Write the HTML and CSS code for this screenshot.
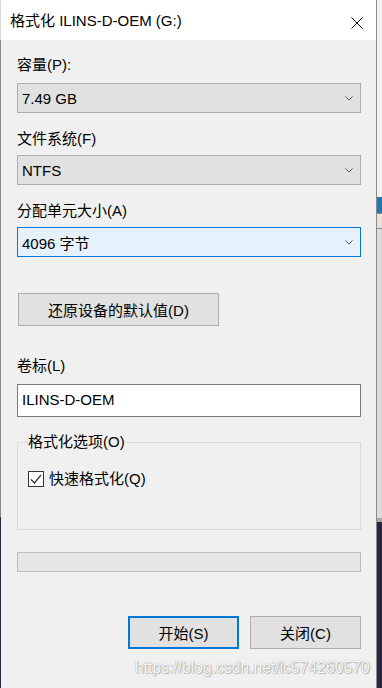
FILE: index.html
```html
<!DOCTYPE html>
<html lang="zh-CN">
<head>
  <meta charset="UTF-8" />
  <title>格式化 ILINS-D-OEM (G:)</title>
  <meta name="viewport" content="width=device-width, initial-scale=1" />
  <link rel="stylesheet" href="styles.css">
</head>
<body>

  <div class="screen">
    <div class="edge-left"></div>

    <div class="dialog">
      <!-- Title bar -->
      <div class="titlebar">
        <span class="title">格式化 ILINS-D-OEM (G:)</span>
        <svg class="close" width="12" height="12" viewBox="0 0 12 12">
          <path d="M0.5 0.5 L11.5 11.5 M11.5 0.5 L0.5 11.5" stroke="#000" stroke-width="1" fill="none" />
        </svg>
      </div>

      <div class="content">
        <label class="label first">容量(P):</label>
        <div class="combo">
          <span>7.49 GB</span>
          <svg class="arrow" width="8" height="5" viewBox="0 0 8 5"><path d="M0.5 0.5 L4 4 L7.5 0.5" stroke="#555" fill="none" /></svg>
        </div>

        <label class="label">文件系统(F)</label>
        <div class="combo">
          <span>NTFS</span>
          <svg class="arrow" width="8" height="5" viewBox="0 0 8 5"><path d="M0.5 0.5 L4 4 L7.5 0.5" stroke="#555" fill="none" /></svg>
        </div>

        <label class="label">分配单元大小(A)</label>
        <div class="combo focused">
          <span>4096 字节</span>
          <svg class="arrow" width="8" height="5" viewBox="0 0 8 5"><path d="M0.5 0.5 L4 4 L7.5 0.5" stroke="#555" fill="none" /></svg>
        </div>

        <button class="btn restore">还原设备的默认值(D)</button>

        <label class="label volume">卷标(L)</label>
        <div class="textbox">ILINS-D-OEM</div>

        <fieldset class="group">
          <legend>格式化选项(O)</legend>
          <div class="check-row">
            <span class="checkbox">
              <svg width="14" height="14" viewBox="0 0 14 14"><path d="M2 7.5 L5.5 11 L12 3" stroke="#333" stroke-width="1.2" fill="none" /></svg>
            </span>
            <span>快速格式化(Q)</span>
          </div>
        </fieldset>

        <div class="progress"></div>

        <div class="actions">
          <button class="btn default">开始(S)</button>
          <button class="btn">关闭(C)</button>
        </div>
      </div>

      <div class="watermark">https://blog.csdn.net/lc574260570</div>
    </div>

    <div class="edge-right">
      <div class="strip top"></div>
      <div class="strip blue"></div>
      <div class="strip tab"></div>
      <div class="strip mid"></div>
      <div class="strip line"></div>
      <div class="strip dark"></div>
    </div>
  </div>

</body>
</html>
```

FILE: styles.css
```css
* {
  margin: 0;
  padding: 0;
  box-sizing: border-box;
}

body, html {
  height: 100%;
  font-family: "Liberation Sans", "Noto Sans CJK SC", sans-serif;
  font-size: 15px;
  color: #000;
  background: #f0f0f0;
  overflow: hidden;
}

.screen {
  display: flex;
  height: 688px;
  width: 382px;
}

.edge-left {
  width: 1px;
  background: linear-gradient(#d8d8d8 0, #d8d8d8 40px, #8c8c8c 40px, #8c8c8c 517px, #2a2340 517px);
}

.dialog {
  position: relative;
  width: 376px;
  height: 688px;
  border-right: 1px solid #8a8a8a;
  background: #f0f0f0;
}

.titlebar {
  height: 40px;
  background: #fff;
  display: flex;
  align-items: center;
  justify-content: space-between;
  padding: 2px 13px 0 9px;
}

.title {
  line-height: 20px;
}

.close {
  margin-top: 3px;
}

.content {
  padding: 0 15px 0 16px;
}

.label {
  display: block;
  line-height: 20px;
  margin-top: 16px;
  margin-bottom: 6px;
}

.label.first {
  margin-top: 15px;
  margin-bottom: 8px;
}

.combo {
  height: 30px;
  background: #e1e1e1;
  border: 1px solid #adadad;
  display: flex;
  align-items: center;
  justify-content: space-between;
  padding: 0 7px 0 4px;
}

.combo.focused {
  background: #e5f1fb;
  border-color: #0078d7;
}

.arrow {
  margin-top: 1px;
}

.btn {
  font-family: inherit;
  font-size: 15px;
  color: #000;
  background: #e1e1e1;
  border: 1px solid #adadad;
  height: 33px;
  width: 111px;
}

.btn.restore {
  display: block;
  width: 201px;
  margin: 36px 0 0 1px;
}

.btn.default {
  border: 2px solid #0078d7;
}

.label.volume {
  margin-top: 30px;
  margin-bottom: 8px;
}

.textbox {
  height: 33px;
  background: #fff;
  border: 1px solid #7a7a7a;
  line-height: 29px;
  padding-left: 4px;
}

.group {
  margin-top: 15px;
  height: 98px;
  border: 1px solid #dcdcdc;
  padding: 0 0 0 10px;
}

.group legend {
  line-height: 20px;
  padding: 0 1px 0 0;
}

.check-row {
  display: flex;
  align-items: center;
  gap: 5px;
  margin-top: 17px;
  line-height: 20px;
}

.checkbox {
  width: 16px;
  height: 16px;
  border: 1px solid #333;
  background: #fff;
  display: flex;
  align-items: center;
  justify-content: center;
}

.progress {
  margin-top: 22px;
  height: 20px;
  background: #e6e6e6;
  border: 1px solid #bcbcbc;
}

.actions {
  display: flex;
  justify-content: flex-end;
  gap: 11px;
  margin-top: 44px;
}

.watermark {
  position: absolute;
  left: 134px;
  top: 659px;
  font-size: 15.7px;
  line-height: 18px;
  white-space: nowrap;
  color: #fbfbfb;
  text-shadow: 0 0 1px rgba(0, 0, 0, 0.45), 1px 1px 1px rgba(0, 0, 0, 0.2);
}

.edge-right {
  width: 5px;
  display: flex;
  flex-direction: column;
}

.strip.top {
  height: 197px;
  background: #f2f2f2;
}

.strip.blue {
  height: 16px;
  background: #1d78b4;
}

.strip.tab {
  height: 16px;
  background: #e8e4dc;
  border-top: 1px solid #888;
  border-bottom: 1px solid #888;
}

.strip.mid {
  height: 289px;
  background: #dcdcdc;
}

.strip.line {
  height: 4px;
  background: #a8a8a8;
}

.strip.dark {
  flex: 1;
  background: #2b2442;
}
```
